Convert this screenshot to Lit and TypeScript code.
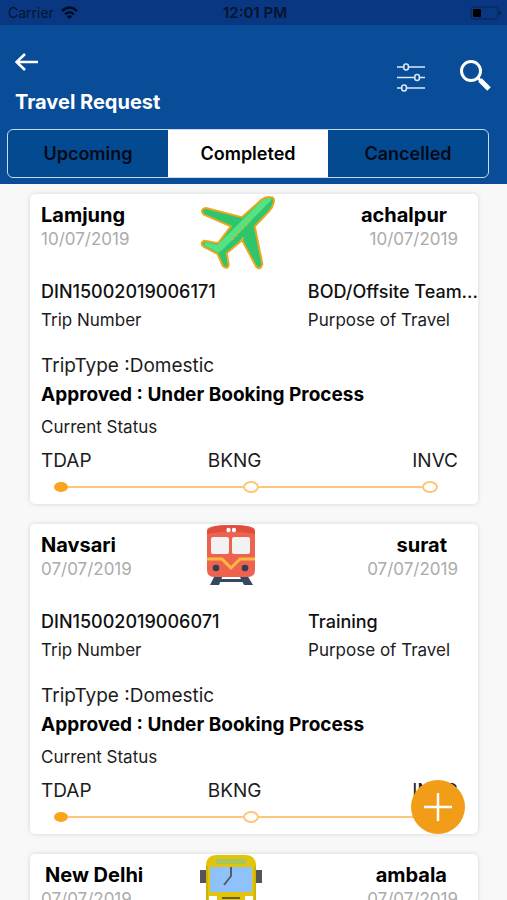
import { LitElement, html, css, svg, nothing } from "lit";
import { customElement, property } from "lit/decorators.js";

interface Trip {
  from: string;
  fromDate: string;
  to: string;
  toDate: string;
  mode: "plane" | "train" | "bus";
  din: string;
  purpose: string;
}

const TRIPS: Trip[] = [
  { from: "Lamjung", fromDate: "10/07/2019", to: "achalpur", toDate: "10/07/2019", mode: "plane", din: "DIN15002019006171", purpose: "BOD/Offsite Team..." },
  { from: "Navsari", fromDate: "07/07/2019", to: "surat", toDate: "07/07/2019", mode: "train", din: "DIN15002019006071", purpose: "Training" },
  { from: "New Delhi", fromDate: "07/07/2019", to: "ambala", toDate: "07/07/2019", mode: "bus", din: "DIN15002019006061", purpose: "Training" },
];

const PLANE_BODY =
  "M232 24Q243 24 239 38Q236 52 226 62L182 108L205 222Q202 238 192 228L148 146L98 188L104 224Q102 236 92 226L76 190L34 168Q24 160 34 155L74 163L80 158L118 108L34 71Q24 60 38 57L148 85L206 32Q218 23 232 24Z";

const plane = svg`
  <path d=${PLANE_BODY} fill="none" stroke="#eda71d" stroke-width="12" stroke-linejoin="round"/>
  <path d=${PLANE_BODY} fill="#2fc56d"/>
  <path fill="#55e283" d="M206 32Q218 23 232 24L236 29L88 180L76 188L34 166L34 157L74 165L80 158Z"/>
  <path d="M172 90L112 153" fill="none" stroke="#d9b632" stroke-width="7" stroke-dasharray="6 9"/>
  <path d="M152 142L142 154" stroke="#d9b632" stroke-width="5"/>`;

const train = svg`
  <path fill="#34495e" d="M15 51h8l-4 10h-9zM39 51h8l6 10h-9zM19 55h24v3H19z"/>
  <path fill="#ee6350" d="M7 6Q8 1 31 1T55 6V46Q55 53 48 53H14Q7 53 7 46Z"/>
  <path fill="#dd4e3f" d="M7 8Q8 1 31 1T55 8V10Q31 5 7 10Z"/>
  <circle cx="28.500" cy="6" r="2.200" fill="#fff"/><circle cx="34" cy="6" r="2.200" fill="#fff"/>
  <rect x="11" y="13" width="18" height="17" rx="2" fill="#f2f2f2"/>
  <rect x="32" y="13" width="18" height="17" rx="2" fill="#f2f2f2"/>
  <path d="M7 35h15l9 9 9-9h15" fill="none" stroke="#fcb940" stroke-width="3"/>
  <circle cx="16" cy="44" r="3.300" fill="#2f3f52"/><circle cx="45" cy="44" r="3.300" fill="#2f3f52"/>`;

const bus = svg`
  <path fill="#555" d="M0 16h6v13H0zM56 16h6v13h-6z"/>
  <path fill="#e2c40c" d="M6 10Q7 1 17 1H45Q55 1 56 10V62H6Z"/>
  <path fill="#d0b30a" d="M6 12h2v50H6zM54 12h2v50h-2z"/>
  <rect x="16" y="5" width="30" height="5" fill="#a9c65c"/>
  <rect x="10" y="13" width="42" height="25" fill="#8fc1fb"/>
  <path d="M31 13v9l-7 9" fill="none" stroke="#555c66" stroke-width="2"/>
  <path d="M22 44h18" stroke="#6b5f20" stroke-width="2"/>
  <rect x="9" y="42" width="8" height="6" fill="#fff"/><rect x="45" y="42" width="8" height="6" fill="#fff"/>`;

const ICONS = {
  plane: html`<svg width="76" height="78" viewBox="21 12 228 234" aria-hidden="true">${plane}</svg>`,
  train: html`<svg width="62" height="62" viewBox="0 0 62 62" aria-hidden="true">${train}</svg>`,
  bus: html`<svg width="62" height="62" viewBox="0 0 62 62" aria-hidden="true">${bus}</svg>`,
};

@customElement("trip-card")
export class TripCard extends LitElement {
  @property({ attribute: false }) trip!: Trip;

  static styles = css`
    :host { display: block; }
    .card {
      background: #fff;
      border-radius: 5px;
      box-shadow: 0 0 5px rgba(0, 0, 0, 0.14);
      padding: 0 0 7px 11px;
      display: flex;
      flex-direction: column;
      color: #1c1c1c;
      font-size: 17px;
      line-height: 24px;
    }
    .route {
      display: grid;
      grid-template-columns: 4fr 90px 5fr;
      height: 83px;
      padding-right: 20px;
    }
    .end { text-align: right; }
    .place { margin: 0; padding-top: 9px; font-size: 20px; font-weight: 700; line-height: 24px; color: #000; }
    .end .place { padding-right: 11px; }
    .indent { padding-left: 4px; }
    .date { color: #ababab; }
    .mode { display: flex; justify-content: center; align-items: flex-start; }
    .plane { justify-content: flex-end; }
    .facts {
      display: grid;
      grid-template-columns: 11fr 7fr;
      grid-auto-rows: 29px;
      line-height: 29px;
      white-space: nowrap;
    }
    .strong { font-size: 18px; font-weight: 500; color: #111; }
    .type { padding-top: 16px; font-size: 19px; line-height: 29px; }
    .status { font-size: 19px; line-height: 29px; font-weight: 700; color: #000; }
    .caption { font-size: 17px; line-height: 36px; }
    .steps { display: grid; grid-template-columns: 2fr 2fr 1fr; padding-right: 20px; font-size: 19px; line-height: 32px; }
    .last { text-align: right; }
    .track { display: flex; align-items: center; padding: 4px 40px 4px 13px; }
    .dot { box-sizing: border-box; width: 16px; height: 12px; border: 2px solid #fdc674; border-radius: 50%; }
    .on { background: #fba51d; border-color: #fba51d; height: 10px; width: 14px; }
    .line { height: 2px; background: #fdc67c; flex: 175 1 0; }
    .short { flex-grow: 163; }
  `;

  render() {
    const t = this.trip;
    if (!t) return nothing;
    return html`
      <article class="card">
        <div class="route">
          <div>
            <h2 class="place ${t.mode === "bus" ? "indent" : ""}">${t.from}</h2>
            <time class="date">${t.fromDate}</time>
          </div>
          <div class="mode ${t.mode}">${ICONS[t.mode]}</div>
          <div class="end">
            <h2 class="place">${t.to}</h2>
            <time class="date">${t.toDate}</time>
          </div>
        </div>
        <div class="facts">
          <div class="strong">${t.din}</div>
          <div class="strong">${t.purpose}</div>
          <div>Trip Number</div>
          <div>Purpose of Travel</div>
        </div>
        <div class="type">TripType :Domestic</div>
        <div class="status">Approved : Under Booking Process</div>
        <div class="caption">Current Status</div>
        <div class="steps"><span>TDAP</span><span>BKNG</span><span class="last">INVC</span></div>
        <div class="track">
          <span class="dot on"></span><span class="line"></span>
          <span class="dot"></span><span class="line short"></span>
          <span class="dot"></span>
        </div>
      </article>
    `;
  }
}

@customElement("app-root")
export class AppRoot extends LitElement {
  static styles = css`
    :host {
      display: flex;
      flex-direction: column;
      height: 100vh;
      overflow: hidden;
      position: relative;
      background: #f8f8f8;
      font-family: Inter, "Liberation Sans", sans-serif;
    }
    button { font: inherit; border: 0; padding: 0; background: none; cursor: pointer; }
    svg { display: block; }
    .statusbar {
      display: grid;
      grid-template-columns: 1fr auto 1fr;
      align-items: center;
      height: 25px;
      padding: 0 5px 0 8px;
      background: #0a3782;
      color: #04142f;
      font-size: 14px;
      line-height: 24px;
    }
    .carrier { display: flex; align-items: center; gap: 7px; }
    .clock { font-size: 15px; font-weight: 600; }
    .battery { justify-self: end; }
    .header { background: #094c98; padding: 22px 16px 6px 7px; }
    .bar { display: flex; justify-content: space-between; padding-left: 8px; }
    .left { display: flex; flex-direction: column; align-items: flex-start; gap: 12px; }
    .title { margin: 0; font-size: 20px; font-weight: 700; line-height: 24px; color: #fff; }
    .actions { display: flex; align-items: center; gap: 34px; padding-top: 10px; height: 38px; }
    .tabs {
      display: flex;
      height: 47px;
      margin: 15px 2px 0 0;
      border: 1px solid #c3dcf2;
      border-radius: 6px;
      overflow: hidden;
      background: #034a91;
    }
    .tab { flex: 1; font-size: 18px; font-weight: 600; color: #020a18; }
    .active { background: #fff; color: #000; }
    .list { flex: 1; min-height: 0; overflow: hidden; display: flex; flex-direction: column; gap: 20px; padding: 10px 29px 0 30px; }
    .fab {
      position: absolute;
      right: 42px;
      bottom: 66px;
      width: 54px;
      height: 54px;
      border-radius: 50%;
      background: #f29d17;
      display: grid;
      place-items: center;
    }
  `;

  render() {
    return html`
      <div class="statusbar">
        <div class="carrier">
          <span>Carrier</span>
          <svg width="17" height="13" viewBox="0 0 17 13" fill="none" stroke="#020c20" stroke-width="2.400" aria-hidden="true">
            <path d="M1 5Q8.500 -2 16 5M4 8.300Q8.500 4 13 8.300"/>
            <path d="M8.500 13L5.800 10.300Q8.500 8 11.200 10.300Z" fill="#020c20" stroke="none"/>
          </svg>
        </div>
        <span class="clock">12:01 PM</span>
        <svg class="battery" width="32" height="14" viewBox="0 0 32 14" aria-hidden="true">
          <rect x="1" y="1" width="27" height="12" rx="3" fill="none" stroke="#062552"/>
          <rect x="3" y="3" width="8" height="8" rx="1" fill="#000"/>
          <path d="M30 5v4" stroke="#062552" stroke-width="2"/>
        </svg>
      </div>
      <header class="header">
        <div class="bar">
          <div class="left">
            <button aria-label="Back">
              <svg width="24" height="31" viewBox="0 0 24 31" fill="none" stroke="#fff" stroke-width="2.600">
                <path d="M23 15H2M10 7L1.500 15L10 23"/>
              </svg>
            </button>
            <h1 class="title">Travel Request</h1>
          </div>
          <div class="actions">
            <button aria-label="Filter">
              <svg width="28" height="32" viewBox="0 0 28 32" fill="none" stroke="#dbe9f8" stroke-width="1.600">
                <path d="M0 7H6M12 7H28M0 17.500H17M23 17.500H28M0 28H4M10 28H28"/>
                <rect x="6.800" y="4" width="4.600" height="6" rx="2.200"/>
                <rect x="17.800" y="14.500" width="4.600" height="6" rx="2.200"/>
                <rect x="4.800" y="25" width="4.600" height="6" rx="2.200"/>
              </svg>
            </button>
            <button aria-label="Search">
              <svg width="32" height="32" viewBox="0 0 32 32" fill="none" stroke="#fff">
                <circle cx="12" cy="11" r="9.500" stroke-width="3"/>
                <path d="M18.500 17.500L22 21" stroke-width="3"/>
                <path d="M21 20L30 29" stroke-width="5"/>
              </svg>
            </button>
          </div>
        </div>
        <nav class="tabs">
          <button class="tab">Upcoming</button>
          <button class="tab active">Completed</button>
          <button class="tab">Cancelled</button>
        </nav>
      </header>
      <main class="list">${TRIPS.map((t) => html`<trip-card .trip=${t}></trip-card>`)}</main>
      <button class="fab" aria-label="New request">
        <svg width="30" height="30" viewBox="0 0 30 30" stroke="#fff" stroke-width="2.500"><path d="M1 15H29M15 1V29"/></svg>
      </button>
    `;
  }
}
